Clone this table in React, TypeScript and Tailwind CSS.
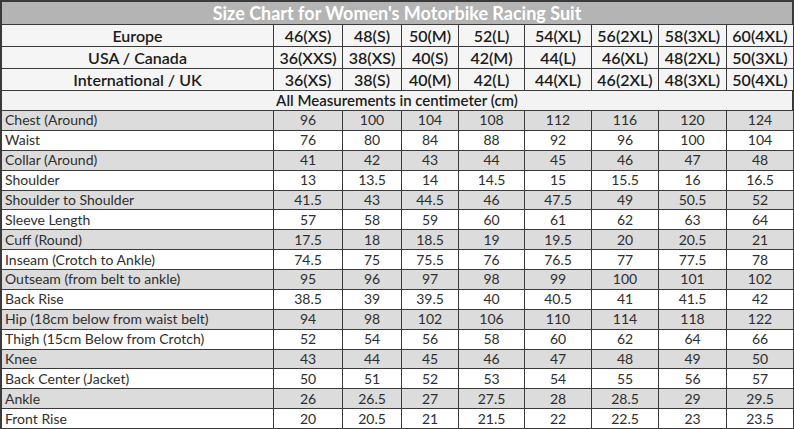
import React from "react";

const sizes = [
  ["Europe", "46(XS)", "48(S)", "50(M)", "52(L)", "54(XL)", "56(2XL)", "58(3XL)", "60(4XL)"],
  ["USA / Canada", "36(XXS)", "38(XS)", "40(S)", "42(M)", "44(L)", "46(XL)", "48(2XL)", "50(3XL)"],
  ["International / UK", "36(XS)", "38(S)", "40(M)", "42(L)", "44(XL)", "46(2XL)", "48(3XL)", "50(4XL)"],
];

const data: (string)[][] = [
  ["Chest (Around)", "96", "100", "104", "108", "112", "116", "120", "124"],
  ["Waist", "76", "80", "84", "88", "92", "96", "100", "104"],
  ["Collar (Around)", "41", "42", "43", "44", "45", "46", "47", "48"],
  ["Shoulder", "13", "13.5", "14", "14.5", "15", "15.5", "16", "16.5"],
  ["Shoulder to Shoulder", "41.5", "43", "44.5", "46", "47.5", "49", "50.5", "52"],
  ["Sleeve Length", "57", "58", "59", "60", "61", "62", "63", "64"],
  ["Cuff (Round)", "17.5", "18", "18.5", "19", "19.5", "20", "20.5", "21"],
  ["Inseam (Crotch to Ankle)", "74.5", "75", "75.5", "76", "76.5", "77", "77.5", "78"],
  ["Outseam (from belt to ankle)", "95", "96", "97", "98", "99", "100", "101", "102"],
  ["Back Rise", "38.5", "39", "39.5", "40", "40.5", "41", "41.5", "42"],
  ["Hip (18cm below from waist belt)", "94", "98", "102", "106", "110", "114", "118", "122"],
  ["Thigh (15cm Below from Crotch)", "52", "54", "56", "58", "60", "62", "64", "66"],
  ["Knee", "43", "44", "45", "46", "47", "48", "49", "50"],
  ["Back Center (Jacket)", "50", "51", "52", "53", "54", "55", "56", "57"],
  ["Ankle", "26", "26.5", "27", "27.5", "28", "28.5", "29", "29.5"],
  ["Front Rise", "20", "20.5", "21", "21.5", "22", "22.5", "23", "23.5"],
];

const gridCols =
  "grid grid-cols-[272px_69px_59px_57px_66px_67px_67px_68px_68px]";

export default function App() {
  return (
    <div
      className="w-[794px] h-[429px] overflow-hidden bg-white"
      style={{ fontFamily: "Lato, 'Open Sans', sans-serif" }}
    >
      <div className="w-[794px] border-l-2 border-[#3a3a3a]">
        <div className="h-[25px] border-t-2 border-b border-r-2 border-[#3a3a3a] bg-[#b4b4b4] flex items-center justify-center text-white font-bold text-[18px] leading-none">
          Size Chart for Women's Motorbike Racing Suit
        </div>
        {sizes.map((row, ri) => (
          <div
            key={ri}
            className={`${gridCols} h-[22px] border-b border-[#3a3a3a] bg-[#f5f5f5] text-[#1c1c1c] font-semibold text-[16px] leading-none`}
          >
            {row.map((c, ci) => (
              <div
                key={ci}
                className={`flex items-center justify-center border-r border-[#3a3a3a] ${ci === 8 ? "border-r-2" : ""}`}
              >
                {c}
              </div>
            ))}
          </div>
        ))}
        <div className="h-[20px] border-b border-r-2 border-[#3a3a3a] bg-[#f3f3f3] flex items-center justify-center text-[#1c1c1c] font-semibold text-[15px] leading-none">
          All Measurements in centimeter (cm)
        </div>
        {data.map((row, ri) => (
          <div
            key={ri}
            className={`${gridCols} h-[19.875px] border-b border-[#3a3a3a] text-[#2e2e2e] text-[14px] leading-none ${ri % 2 === 0 ? "bg-[#dcdcdc]" : "bg-white"}`}
          >
            {row.map((c, ci) => (
              <div
                key={ci}
                className={`flex items-center border-r border-[#3a3a3a] ${ci === 0 ? "justify-start pl-[3px]" : "justify-center"} ${ci === 8 ? "border-r-2" : ""}`}
              >
                {c}
              </div>
            ))}
          </div>
        ))}
      </div>
    </div>
  );
}
